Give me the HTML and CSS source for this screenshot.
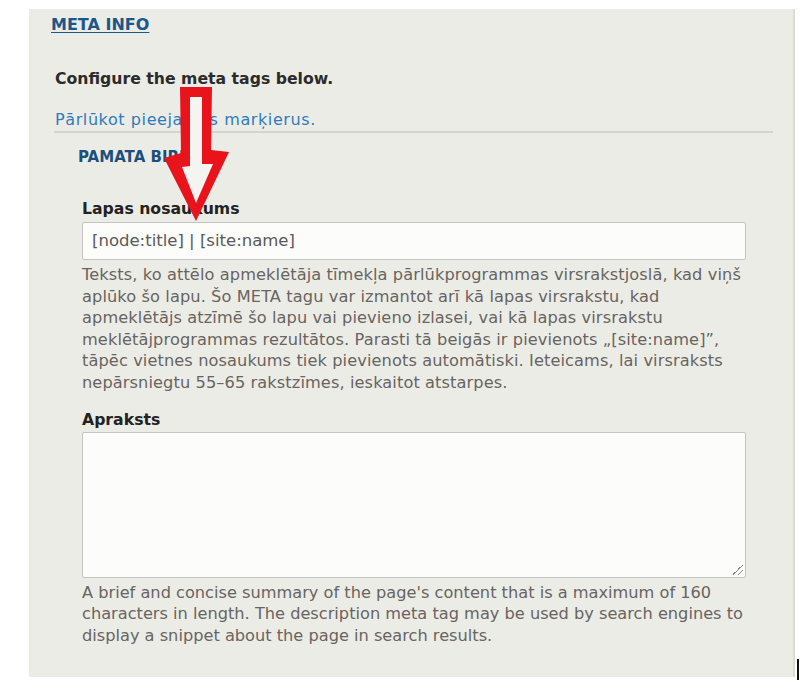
FILE: index.html
```html
<!DOCTYPE html>
<html lang="lv">
<head>
<meta charset="utf-8">
<title>Meta info</title>
<link rel="stylesheet" href="styles.css">
</head>
<body>
<div class="panel">
  <h2 class="title"><a href="#">META INFO</a></h2>
  <p class="intro">Configure the meta tags below.</p>
  <p class="browse"><a href="#">Pārlūkot pieejamās marķierus.</a></p>
  <div class="rule"></div>
  <div class="group">
    <h3 class="legend">PAMATA BIRKAS</h3>
    <div class="field">
      <label class="label">Lapas nosaukums</label>
      <div class="input">[node:title] | [site:name]</div>
      <p class="desc desc-lv">Teksts, ko attēlo apmeklētāja tīmekļa pārlūkprogrammas virsrakstjoslā, kad viņš<br>aplūko šo lapu. Šo META tagu var izmantot arī kā lapas virsrakstu, kad<br>apmeklētājs atzīmē šo lapu vai pievieno izlasei, vai kā lapas virsrakstu<br>meklētājprogrammas rezultātos. Parasti tā beigās ir pievienots „[site:name]”,<br>tāpēc vietnes nosaukums tiek pievienots automātiski. Ieteicams, lai virsraksts<br>nepārsniegtu 55–65 rakstzīmes, ieskaitot atstarpes.</p>
    </div>
    <div class="field field-second">
      <label class="label">Apraksts</label>
      <div class="textarea"><span class="grip"></span></div>
      <p class="desc">A brief and concise summary of the page's content that is a maximum of 160<br>characters in length. The description meta tag may be used by search engines to<br>display a snippet about the page in search results.</p>
    </div>
  </div>
</div>
<svg class="arrow" width="80" height="145" viewBox="160 84 80 145" aria-hidden="true">
  <path d="M180,87 L212,87 L211,150 L229,152 L196,221 L164,158 L181,153 Z" fill="#e8131b"/>
  <path d="M190,97 L202,97 L202,164 L213,164 L196,203 L182,167 L190,166 Z" fill="#f4f4f1"/>
</svg>
<div class="caret"></div>
</body>
</html>
```
FILE: styles.css
```css
html, body {
  margin: 0;
  padding: 0;
  background: #ffffff;
}
body {
  width: 800px;
  height: 685px;
  position: relative;
  overflow: hidden;
  font-family: "DejaVu Sans", Verdana, sans-serif;
}
.panel {
  margin: 9px 0 0 29px;
  width: 766px;
  height: 668px;
  background: #ecece7;
  border-right: 2px solid #dcdcd7;
  padding-top: 1px;
  box-sizing: border-box;
}
.title {
  margin: 0 0 0 22px;
  font-size: 16px;
  line-height: 30px;
  font-weight: bold;
}
.title a {
  color: #1b5788;
  text-decoration: underline;
  text-underline-offset: 2px;
}
.intro {
  margin: 28px 0 0 26px;
  font-size: 15.7px;
  line-height: 22px;
  font-weight: bold;
  color: #2b2b2b;
}
.browse {
  margin: 19px 0 0 26px;
  font-size: 16px;
  line-height: 22px;
  letter-spacing: 0.6px;
}
.browse a {
  color: #2f7bbd;
  text-decoration: none;
}
.rule {
  margin: 0 0 0 25px;
  width: 719px;
  height: 2px;
  background: #d5d5d0;
}
.group {
  padding-left: 49px;
}
.legend {
  margin: 13px 0 0 0;
  font-size: 15px;
  line-height: 22px;
  font-weight: bold;
  color: #1b4f7c;
}
.field {
  margin: 30px 0 0 4px;
  width: 664px;
}
.field-second {
  margin-top: 15px;
}
.label {
  display: block;
  font-size: 15.7px;
  line-height: 22px;
  font-weight: bold;
  color: #222222;
}
.input {
  margin-top: 2px;
  height: 38px;
  box-sizing: border-box;
  border: 1px solid #c4c4c0;
  border-radius: 2px;
  background: #fcfcfa;
  padding: 0 9px;
  font-size: 16.5px;
  line-height: 36px;
  color: #595959;
}
.textarea {
  position: relative;
  margin-top: 1px;
  height: 146px;
  box-sizing: border-box;
  border: 1px solid #c4c4c0;
  border-radius: 2px;
  background: #fcfcfa;
}
.grip {
  position: absolute;
  right: 2px;
  bottom: 2px;
  width: 10px;
  height: 10px;
  background: linear-gradient(135deg, transparent 45%, #888 45%, #888 52%, transparent 52%, transparent 72%, #888 72%, #888 79%, transparent 79%);
}
.desc {
  margin: 4px 0 0 0;
  font-size: 16.2px;
  line-height: 21.6px;
  color: #68645f;
  white-space: nowrap;
}
.desc-lv {
  letter-spacing: 0.1px;
}
.arrow {
  position: absolute;
  left: 160px;
  top: 84px;
}
.caret {
  position: absolute;
  left: 797px;
  top: 659px;
  width: 2px;
  height: 21px;
  background: #111111;
}
```
